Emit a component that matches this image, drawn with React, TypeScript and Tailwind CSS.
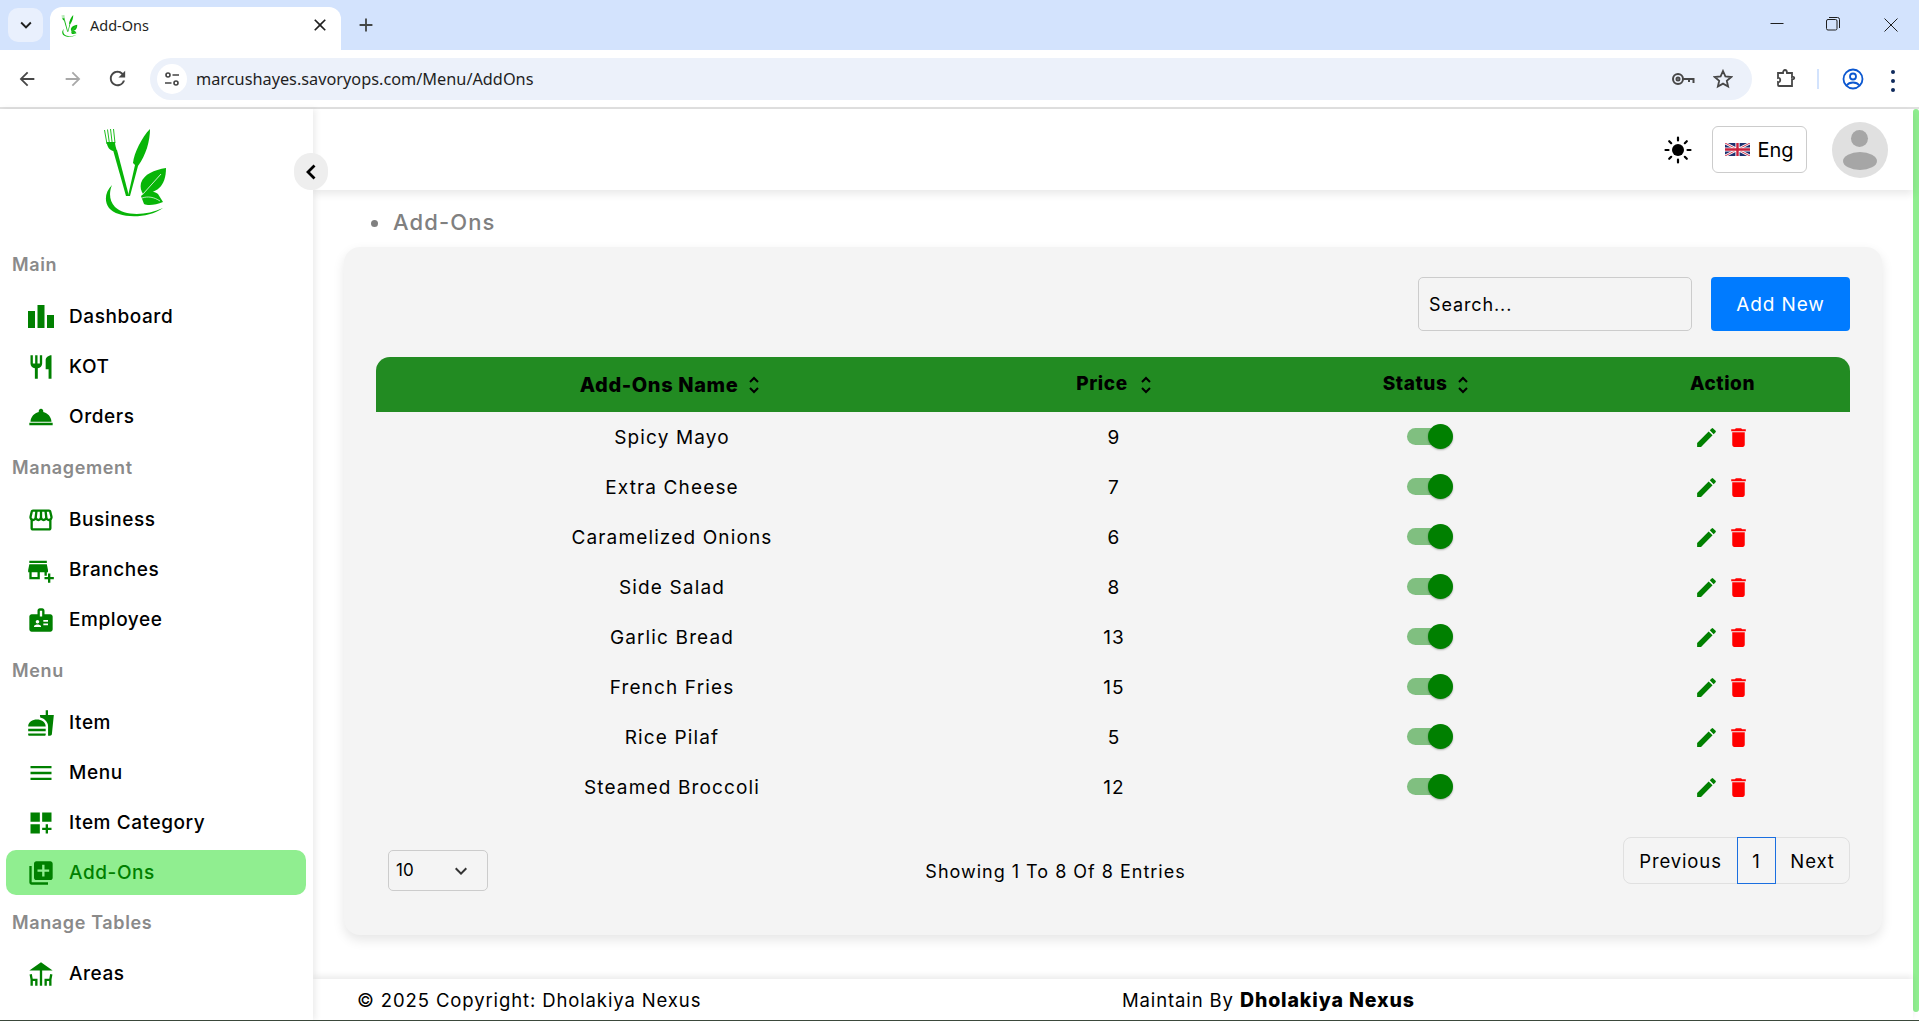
import React from "react";
import {
  MdRestaurant, MdRoomService, MdOutlineStorefront, MdAddBusiness, MdBadge,
  MdFastfood, MdMenu, MdDashboardCustomize, MdLibraryAdd, MdDeck, MdEdit, MdDelete,
  MdArrowBack, MdArrowForward, MdRefresh, MdKeyboardArrowDown, MdClose, MdAdd,
} from "react-icons/md";

function Logo({ w, h }: { w: number; h: number }) {
  return (
    <svg width={w} height={h} viewBox="0 0 62 88" fill="#08b508">
      <path d="M.5 1l2.500 14M3.500.5l2 14.500M6.500 0l1.800 15M9.500 0l1.500 14" stroke="#08b508" strokeWidth="0.900" fill="none" />
      <path d="M2.500 13C3.500 19 6 21 9 22h4c-1-3-2-6-2-9z" />
      <path d="M9 21h4l12 46h-3z" />
      <path d="M46 0C38 8 30 24 29 34l2 2-7 31h2l8-30C42 26 46 12 46 0z" />
      <path d="M62 39C50 41 40 45 37 54c-1 4 0 8 2 11 13-1 23-7 23-26z" />
      <path d="M39 65L57 45" stroke="white" strokeWidth="0.800" fill="none" />
      <path d="M37 67c7-6 13-5 17-2l5 8c-7 3-15 4-19 2z" />
      <path d="M38 69c6-2 12-1 18 3" stroke="white" strokeWidth="0.700" fill="none" />
      <path d="M8 56C1 63 0 72 5 79c8 10 37 12 54 0-17 8-39 8-48-1C5 72 5 63 8 56z" />
    </svg>
  );
}

function Bars({ color }: { size?: number; color?: string }) {
  return (
    <svg width="26" height="23" viewBox="0 0 26 23" fill={color}>
      <rect x="0" y="6" width="7" height="17" />
      <rect x="9.500" y="0" width="7" height="23" />
      <rect x="19" y="10" width="7" height="13" />
    </svg>
  );
}

function Sun() {
  return (
    <svg width="28" height="28" viewBox="0 0 28 28" fill="black" stroke="black" strokeWidth="2.200" strokeLinecap="round">
      <circle cx="14" cy="14" r="6" stroke="none" />
      <path d="M14 1.500v3M14 23.500v3M1.500 14h3M23.500 14h3M5.200 5.200l2 2M20.800 20.800l2 2M22.800 5.200l-2 2M7.200 20.800l-2 2" />
    </svg>
  );
}

function UkFlag() {
  return (
    <svg width="25" height="13" viewBox="0 0 25 13">
      <rect width="25" height="13" fill="#1d2f6f" />
      <path d="M0 0l25 13M25 0L0 13" stroke="white" strokeWidth="2.600" />
      <path d="M0 0l25 13M25 0L0 13" stroke="#c8203c" strokeWidth="0.900" />
      <path d="M12.500 0v13M0 6.500h25" stroke="white" strokeWidth="4.200" />
      <path d="M12.500 0v13M0 6.500h25" stroke="#c8203c" strokeWidth="2.400" />
    </svg>
  );
}

function Sort() {
  return (
    <svg width="12" height="20" viewBox="0 0 12 20" fill="none" stroke="black" strokeWidth="2" className="shrink-0">
      <path d="M2 7l4-4 4 4M2 13l4 4 4-4" />
    </svg>
  );
}

function Toggle() {
  return (
    <div className="relative w-[46px] h-[26px] ml-1">
      <div className="absolute left-0 top-[4px] w-[43px] h-[17px] rounded-full bg-[#80bf80]" />
      <div className="absolute right-0 top-0 w-[25px] h-[25px] rounded-full bg-[#008000] shadow-[0_1px_2px_rgba(0,0,0,0.3)]" />
    </div>
  );
}

type Item = { label: string; Icon: React.ComponentType<{ size?: number; color?: string }>; active?: boolean };
const sections: { title: string; cls: string; items: Item[] }[] = [
  { title: "Main", cls: "h-[53px] leading-[47px]", items: [
    { label: "Dashboard", Icon: Bars }, { label: "KOT", Icon: MdRestaurant }, { label: "Orders", Icon: MdRoomService },
  ] },
  { title: "Management", cls: "h-[53px] leading-[47px]", items: [
    { label: "Business", Icon: MdOutlineStorefront }, { label: "Branches", Icon: MdAddBusiness }, { label: "Employee", Icon: MdBadge },
  ] },
  { title: "Menu", cls: "h-[53px] leading-[47px]", items: [
    { label: "Item", Icon: MdFastfood }, { label: "Menu", Icon: MdMenu }, { label: "Item Category", Icon: MdDashboardCustomize },
    { label: "Add-Ons", Icon: MdLibraryAdd, active: true },
  ] },
  { title: "Manage Tables", cls: "h-[51px] leading-[45px]", items: [{ label: "Areas", Icon: MdDeck }] },
];

const rows: [string, number][] = [
  ["Spicy Mayo", 9], ["Extra Cheese", 7], ["Caramelized Onions", 6], ["Side Salad", 8],
  ["Garlic Bread", 13], ["French Fries", 15], ["Rice Pilaf", 5], ["Steamed Broccoli", 12],
];

function Browser() {
  return (
    <div className="shrink-0 font-['Noto_Sans',sans-serif]">
      <div className="h-[50px] bg-[#d3e3fd] flex items-end relative">
        <div className="absolute left-[8px] top-[8px] w-[35px] h-[34px] rounded-[10px] bg-[#e9f0fd] flex items-center justify-center">
          <MdKeyboardArrowDown size={22} color="#1f1f1f" />
        </div>
        <div className="ml-[50px] w-[291px] h-[43px] bg-white rounded-t-[12px] flex items-center pl-[11px] pb-[5px] relative">
          <Logo w={17} h={22} />
          <span className="ml-[12px] text-[14.500px] text-[#1f1f1f]">Add-Ons</span>
          <span className="absolute left-[260px] top-[8px]"><MdClose size={20} color="#1f1f1f" /></span>
        </div>
        <span className="absolute left-[355px] top-[14px]"><MdAdd size={22} color="#444746" /></span>
        <div className="absolute left-[1777px] top-[23px] -translate-x-1/2 w-[13px] h-px bg-[#1f1f1f]" />
        <svg className="absolute left-[1826px] top-[17px]" width="14" height="14" viewBox="0 0 14 14" fill="none" stroke="#1f1f1f">
          <rect x="0.500" y="2.500" width="10.500" height="10.500" rx="1.500" />
          <path d="M3 .5h8.500a2 2 0 0 1 2 2V11" />
        </svg>
        <svg className="absolute left-[1884px] top-[18px]" width="14" height="14" viewBox="0 0 14 14" stroke="#1f1f1f">
          <path d="M.5.5l13 13M13.500.5l-13 13" />
        </svg>
      </div>
      <div className="h-[57px] bg-white rounded-t-[10px] flex items-center relative">
        <span className="absolute left-[16px] top-[18px]"><MdArrowBack size={22} color="#474747" /></span>
        <span className="absolute left-[62px] top-[18px]"><MdArrowForward size={22} color="#a8a8a8" /></span>
        <span className="absolute left-[106px] top-[17px]"><MdRefresh size={23} color="#474747" /></span>
        <div className="ml-[150px] mt-[1px] w-[1602px] h-[42px] rounded-full bg-[#ecf1fa] flex items-center relative">
          <div className="absolute left-[7px] top-[6px] w-[30px] h-[30px] rounded-full bg-white flex items-center justify-center">
            <svg width="16" height="16" viewBox="0 0 16 16" fill="none" stroke="#444" strokeWidth="1.600">
              <circle cx="4" cy="4" r="2" /><path d="M8.500 4H15M1 12h6.500" /><circle cx="12" cy="12" r="2" />
            </svg>
          </div>
          <span className="ml-[46px] pt-px text-[16.300px] text-[#1f1f1f]">marcushayes.savoryops.com/Menu/AddOns</span>
          <svg className="absolute left-[1521px] top-[13px]" width="24" height="16" viewBox="0 0 24 16" fill="none" stroke="#474747" strokeWidth="2">
            <circle cx="7" cy="8" r="5" /><circle cx="7" cy="8" r="1.500" /><path d="M12 8h10.500v4M18 8v3" />
          </svg>
          <svg className="absolute left-[1563px] top-[11px]" width="20" height="20" viewBox="0 0 20 20" fill="none" stroke="#474747" strokeWidth="1.800">
            <path d="M10 2l2.400 5.400 5.800.6-4.400 3.800 1.300 5.700L10 14.600l-5.100 2.900 1.300-5.700L1.800 8l5.800-.6z" />
          </svg>
        </div>
        <svg className="absolute left-[1776px] top-[18px]" width="20" height="20" viewBox="0 0 20 20" fill="none" stroke="#474747" strokeWidth="1.800">
          <path d="M2 5h5c0-4 4-4 4 0h5v4c3-1 3 3 0 2v7H3c-1 0-1-1-1-1v-3c3 1 3-5 0-4z" />
        </svg>
        <div className="absolute left-[1817px] top-[19px] w-[2px] h-[20px] bg-[#d3e3fd]" />
        <svg className="absolute left-[1842px] top-[18px]" width="22" height="22" viewBox="0 0 22 22" fill="none" stroke="#0b57d0" strokeWidth="1.800">
          <circle cx="11" cy="11" r="9.500" /><circle cx="11" cy="8.500" r="3" /><path d="M4.500 17.500c3-4 10-4 13 0" />
        </svg>
        <div className="absolute left-[1891px] top-[20px] flex flex-col gap-[5px]">
          <span className="w-[4px] h-[4px] rounded-full bg-[#0f2a5c]" />
          <span className="w-[4px] h-[4px] rounded-full bg-[#0f2a5c]" />
          <span className="w-[4px] h-[4px] rounded-full bg-[#0f2a5c]" />
        </div>
      </div>
      <div className="h-[2px] bg-[#e0e0e0]" />
    </div>
  );
}

function Sidebar() {
  return (
    <aside className="w-[313px] shrink-0 bg-white relative z-20 shadow-[3px_0_6px_rgba(0,0,0,0.07)]">
      <div className="h-[132px] pt-[20px] pl-[104px]"><Logo w={62} h={88} /></div>
      <button className="absolute left-[294px] top-[44px] w-[34px] h-[37px] rounded-full bg-[#eeeeee] flex items-center justify-center">
        <svg width="12" height="18" viewBox="0 0 12 18" fill="none" stroke="black" strokeWidth="2.800"><path d="M9.500 2.500L3 9l6.500 6.500" /></svg>
      </button>
      {sections.map((s) => (
        <div key={s.title}>
          <div className={`${s.cls} pl-[12px] text-[18px] font-semibold text-[#8a8a8a] tracking-[0.035em]`}>{s.title}</div>
          {s.items.map(({ label, Icon, active }) => (
            <div
              key={label}
              className={`mx-[6px] mb-[5px] h-[45px] w-[300px] rounded-[10px] pl-[21px] flex items-center text-[19px] font-medium tracking-[0.03em] ${active ? "bg-[#90ee90] text-[#008000]" : "text-black"}`}
            >
              <span className="w-[28px] flex justify-center"><Icon size={30} color="#008000" /></span>
              <span className="ml-[14px] pt-[2px]">{label}</span>
            </div>
          ))}
        </div>
      ))}
    </aside>
  );
}

function Card() {
  return (
    <section className="mx-[31px] h-[688px] bg-[#f4f4f4] rounded-[16px] px-[32px] pt-[30px] shadow-[0_5px_12px_rgba(0,0,0,0.1)]">
      <div className="flex justify-end h-[54px] gap-[19px]">
        <input
          placeholder="Search..."
          className="w-[274px] h-[54px] rounded-[5px] border border-[#cccccc] bg-[#f4f4f4] px-[10px] pt-[1px] text-[18px] placeholder:text-black outline-none"
        />
        <button className="w-[139px] h-[54px] rounded-[4px] bg-[#007bff] pt-[3px] text-white text-[19px]">Add New</button>
      </div>
      <table className="mt-[26px] w-[1474px] table-fixed border-collapse text-[19px] tracking-[0.06em]">
        <colgroup>
          <col className="w-[592px]" /><col className="w-[292px]" /><col className="w-[335px]" /><col className="w-[255px]" />
        </colgroup>
        <thead>
          <tr className="h-[55px] bg-[#228b22] text-black">
            <th className="rounded-tl-[14px] text-[20px] font-extrabold tracking-[0.03em]"><span className="inline-flex items-center gap-[10px] -ml-1">Add-Ons Name <Sort /></span></th>
            <th className="font-extrabold tracking-[0.03em]"><span className="inline-flex items-center gap-[12px]">Price <Sort /></span></th>
            <th className="font-extrabold tracking-[0.03em]"><span className="inline-flex items-center gap-[10px] -ml-[3px]">Status <Sort /></span></th>
            <th className="rounded-tr-[14px] font-extrabold tracking-[0.03em]">Action</th>
          </tr>
        </thead>
        <tbody>
          {rows.map(([n, p]) => (
            <tr key={n} className="h-[50px] text-center">
              <td className="pt-[2px]">{n}</td>
              <td className="pt-[2px]">{p}</td>
              <td><div className="flex justify-center"><Toggle /></div></td>
              <td>
                <div className="flex justify-center items-center gap-[7px]">
                  <MdEdit size={25} color="#008000" />
                  <MdDelete size={25} color="#ff0000" />
                </div>
              </td>
            </tr>
          ))}
        </tbody>
      </table>
      <div className="mt-[25px] pl-[12px] flex justify-between items-start text-[18px]">
        <div className="mt-[13px] w-[100px] h-[41px] rounded-[5px] border border-[#cccccc] flex items-center justify-between pl-[7px] pr-[14px] text-[17px]">
          <span className="tracking-normal">10</span>
          <MdKeyboardArrowDown size={24} color="#333333" />
        </div>
        <div className="mt-[21px] w-[260px] whitespace-nowrap flex justify-center tracking-[0.055em]">Showing 1 To 8 Of 8 Entries</div>
        <div className="w-[227px] h-[47px] rounded-[8px] border border-[#e0e0e0] flex items-stretch text-[18.500px]">
          <div className="w-[113px] pt-[2px] flex items-center justify-center">Previous</div>
          <div className="w-[39px] -my-px pt-[2px] border border-[#1a6fe0] flex items-center justify-center">1</div>
          <div className="flex-1 pt-[2px] flex items-center justify-center">Next</div>
        </div>
      </div>
    </section>
  );
}

export default function App() {
  return (
    <div className="h-screen overflow-hidden flex flex-col bg-white text-black font-['Inter',sans-serif] tracking-[0.055em]">
      <div className="tracking-normal"><Browser /></div>
      <div className="flex-1 flex min-h-0 border-b border-[#3c4a3c]">
        <Sidebar />
        <main className="flex-1 min-w-0 flex flex-col relative">
          <header className="h-[81px] shrink-0 bg-white shadow-[0_4px_8px_rgba(0,0,0,0.09)] flex items-center justify-end pr-[25px] relative z-10">
            <Sun />
            <button className="ml-[20px] w-[95px] h-[47px] rounded-[6px] border border-[#cccccc] flex items-center justify-center gap-[7px] text-[20px] tracking-normal">
              <UkFlag /> Eng
            </button>
            <div className="ml-[25px] w-[56px] h-[56px] rounded-full bg-[#e0e0e0] overflow-hidden relative">
              <div className="absolute left-[19px] top-[8px] w-[17px] h-[17px] rounded-full bg-[#a6a6a6]" />
              <div className="absolute left-[11px] top-[30px] w-[34px] h-[18px] rounded-[50%] bg-[#a6a6a6]" />
            </div>
          </header>
          <div className="flex-1 min-h-0">
            <div className="h-[57px] pl-[58px] pt-[18px] flex items-start text-[22px] font-medium text-[#808080]">
              <span className="w-[7px] h-[7px] mt-[12px] mr-[15px] rounded-full bg-[#808080]" />
              <span className="leading-[28px] tracking-[0.05em]">Add-Ons</span>
            </div>
            <Card />
          </div>
          <footer className="h-[41px] pt-[2px] shrink-0 bg-white shadow-[0_-3px_6px_rgba(0,0,0,0.08)] flex items-center text-[18.500px] relative z-10">
            <div className="pl-[44px] w-[809px]">© 2025 Copyright: Dholakiya Nexus</div>
            <div>Maintain By <b className="font-extrabold text-[19.500px]">Dholakiya Nexus</b></div>
          </footer>
        </main>
        <div className="w-[6px] shrink-0 h-[903px] rounded-[3px] bg-[#90ee90]" />
      </div>
    </div>
  );
}
